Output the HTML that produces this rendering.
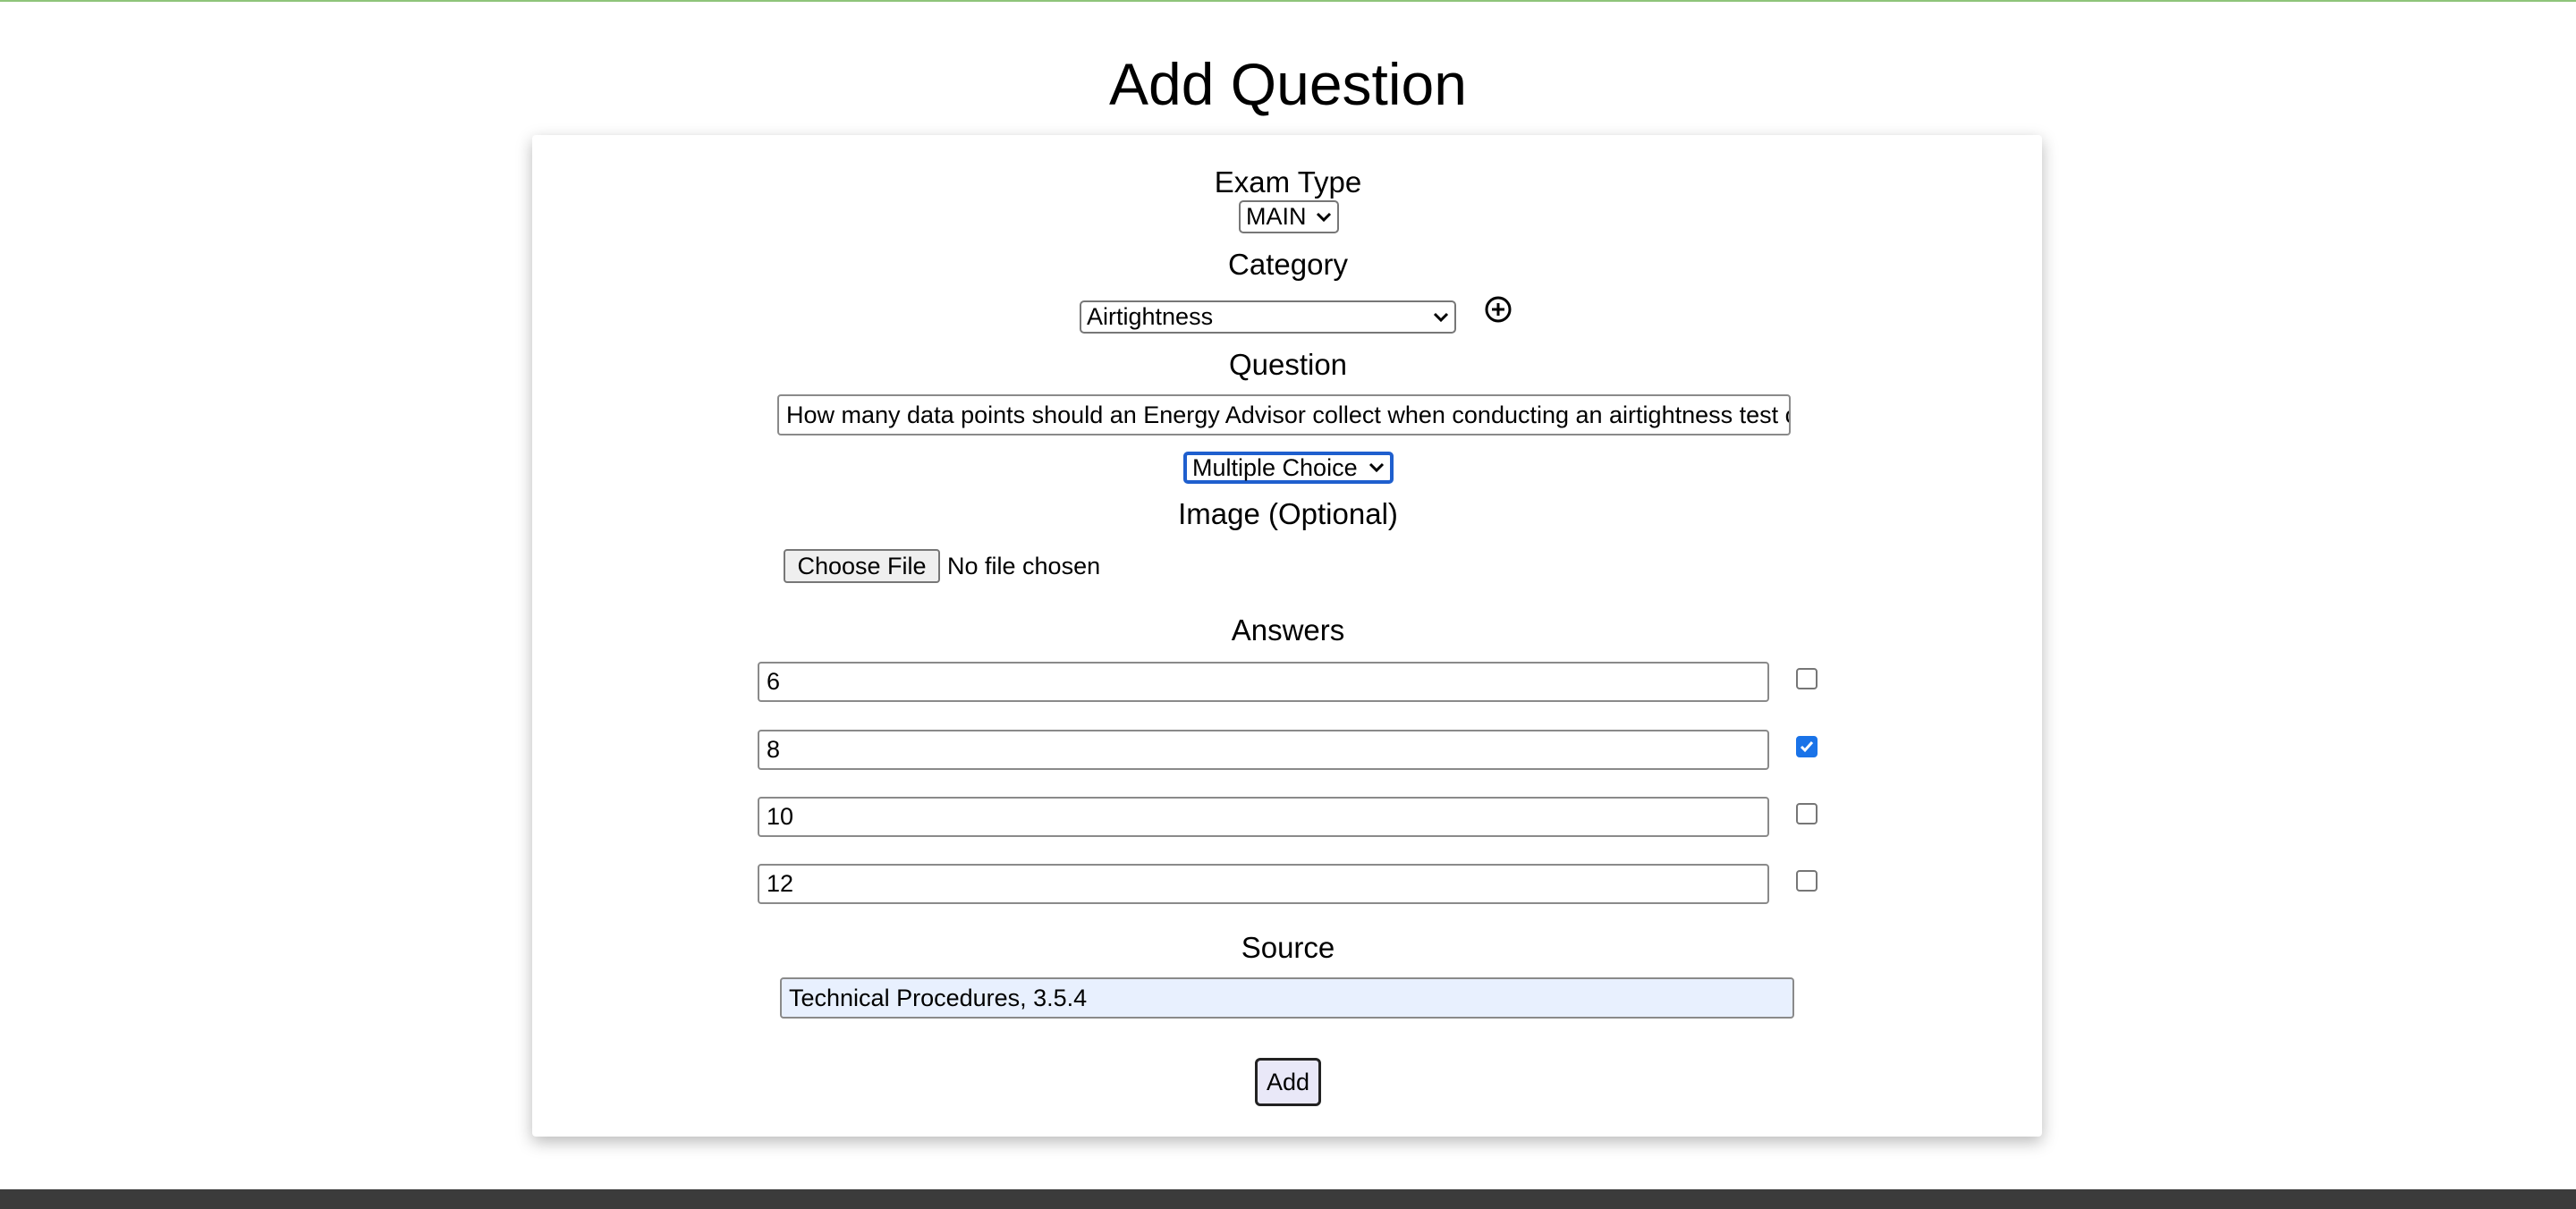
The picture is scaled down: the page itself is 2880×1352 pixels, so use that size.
<!DOCTYPE html>
<html><head><style>
*{box-sizing:border-box;margin:0;padding:0}
body{width:2880px;height:1352px;background:#fff;position:relative;overflow:hidden;font-family:"Liberation Sans",sans-serif;color:#000}
.a{position:absolute}
.lbl{position:absolute;left:0;width:2880px;text-align:center;font-size:33px;line-height:40px}
.in{position:absolute;border:2px solid #8a8a8a;border-radius:4px;background:#fff;font-size:27px;line-height:1;padding:0 8px;display:flex;align-items:center;white-space:nowrap;overflow:hidden}
.sel{position:absolute;border:2px solid #777;border-radius:5px;background:#fff;font-size:27px;display:flex;align-items:center;padding:0 6px;justify-content:space-between}
.cb{position:absolute;width:24px;height:24px;border:2px solid #767676;border-radius:4px;background:#fff}
</style></head><body>
<div class="a" style="left:0;top:0;width:2880px;height:2px;background:#8fc47a"></div>
<div class="lbl" style="top:54px;font-size:66px;line-height:80px">Add Question</div>
<div class="a" style="left:595px;top:151px;width:1688px;height:1120px;background:#fff;border-radius:4px;box-shadow:0 6px 18px rgba(0,0,0,.28)"></div>
<div class="lbl" style="top:184px">Exam Type</div>
<div class="sel" style="left:1385px;top:224px;width:112px;height:37px">MAIN<svg width="18" height="12" viewBox="0 0 18 12"><path d="M2 2l7 7 7-7" fill="none" stroke="#000" stroke-width="3"/></svg></div>
<div class="lbl" style="top:276px">Category</div>
<div class="sel" style="left:1207px;top:336px;width:421px;height:37px">Airtightness<svg width="18" height="12" viewBox="0 0 18 12"><path d="M2 2l7 7 7-7" fill="none" stroke="#000" stroke-width="3"/></svg></div>
<svg class="a" style="left:1659px;top:330px" width="32" height="32" viewBox="0 0 32 32"><circle cx="16" cy="16" r="13" fill="none" stroke="#000" stroke-width="3"/><path d="M16 9v14M9 16h14" stroke="#000" stroke-width="3"/></svg>
<div class="lbl" style="top:388px">Question</div>
<div class="in" style="left:869px;top:441px;width:1133px;height:46px">How many data points should an Energy Advisor collect when conducting an airtightness test collect:</div>
<div class="sel" style="left:1323px;top:505px;width:235px;height:36px;border:4px solid #1f5fce">Multiple Choice<svg width="18" height="12" viewBox="0 0 18 12"><path d="M2 2l7 7 7-7" fill="none" stroke="#000" stroke-width="3"/></svg></div>
<div class="lbl" style="top:555px">Image (Optional)</div>
<div class="a" style="left:876px;top:614px;width:175px;height:38px;border:2px solid #777;border-radius:4px;background:#efefef;font-size:27px;display:flex;align-items:center;justify-content:center">Choose File</div>
<div class="a" style="left:1059px;top:617px;font-size:27px;line-height:32px">No file chosen</div>
<div class="lbl" style="top:685px">Answers</div>
<div class="in" style="left:847px;top:740px;width:1131px;height:45px">6</div>
<div class="cb" style="left:2008px;top:747px"></div>
<div class="in" style="left:847px;top:816px;width:1131px;height:45px">8</div>
<div class="cb" style="left:2008px;top:823px;background:#1a73e8;border-color:#1a73e8"><svg width="20" height="20" viewBox="0 0 20 20"><path d="M4 10l4 4 8-9" fill="none" stroke="#fff" stroke-width="3"/></svg></div>
<div class="in" style="left:847px;top:891px;width:1131px;height:45px">10</div>
<div class="cb" style="left:2008px;top:898px"></div>
<div class="in" style="left:847px;top:966px;width:1131px;height:45px">12</div>
<div class="cb" style="left:2008px;top:973px"></div>
<div class="lbl" style="top:1040px">Source</div>
<div class="in" style="left:872px;top:1093px;width:1134px;height:46px;background:#e8f0fe">Technical Procedures, 3.5.4</div>
<div class="a" style="left:1403px;top:1183px;width:74px;height:54px;border:3px solid #222;border-radius:6px;background:#e9e8f8;font-size:27px;display:flex;align-items:center;justify-content:center">Add</div>
<div class="a" style="left:0;top:1330px;width:2880px;height:22px;background:#3b3b3b"></div>
</body></html>
